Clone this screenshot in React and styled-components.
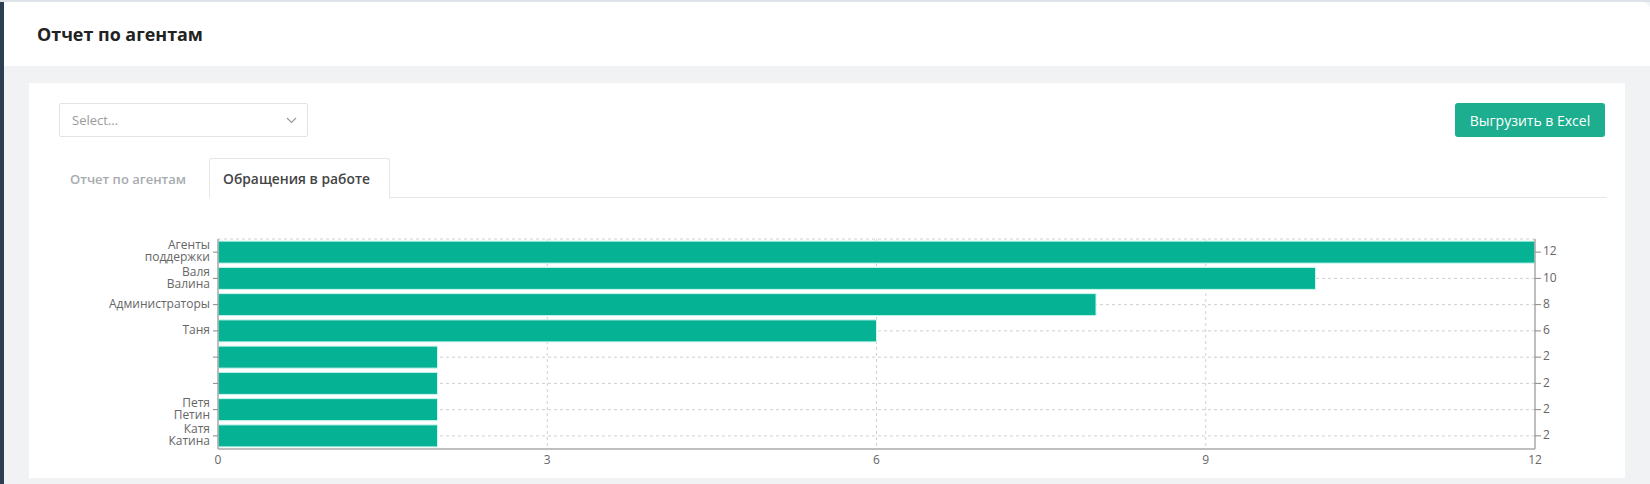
import React from 'react';
import styled, { createGlobalStyle } from 'styled-components';

const GlobalStyle = createGlobalStyle`
  html, body {
    margin: 0;
    padding: 0;
    background: #f1f2f4;
    font-family: "Open Sans", "Noto Sans", sans-serif;
  }
`;

const Page = styled.div`
  display: flex;
  width: 1650px;
  height: 484px;
  background: #f1f2f4;
  border-top: 2px solid #dde3e8;
  box-sizing: border-box;
`;

const Sidebar = styled.div`
  width: 4px;
  flex: none;
  background: #2d3e50;
`;

const Main = styled.div`
  flex: 1;
  display: flex;
  flex-direction: column;
  min-width: 0;
`;

const Header = styled.div`
  height: 64px;
  flex: none;
  display: flex;
  align-items: center;
  padding-left: 33px;
  background: #fff;
  border-top-right-radius: 8px;
`;

const Title = styled.h1`
  margin: 0;
  font-size: 17.9px;
  font-weight: 700;
  color: #222;
`;

const Content = styled.div`
  flex: 1;
  padding: 17px 25px 6px 25px;
  display: flex;
`;

const Card = styled.div`
  flex: 1;
  background: #fff;
  padding: 20px 18px 0 19px;
  display: flex;
  flex-direction: column;
`;

const Toolbar = styled.div`
  display: flex;
  justify-content: space-between;
  align-items: center;
  height: 34px;
`;

const SelectBox = styled.div`
  margin-left: 11px;
  width: 249px;
  height: 34px;
  box-sizing: border-box;
  border: 1px solid #e3e3e3;
  border-radius: 2px;
  display: flex;
  align-items: center;
  justify-content: space-between;
  padding: 0 10px 0 12px;
  font-size: 13px;
  color: #9a9a9a;
`;

const ExportButton = styled.button`
  margin-right: 2px;
  width: 150px;
  height: 34px;
  border: none;
  border-radius: 3px;
  background: #1cae8e;
  color: #fff;
  font-family: inherit;
  font-size: 14px;
`;

const TabBar = styled.div`
  display: flex;
  margin-top: 21px;
  border-bottom: 1px solid #e6e6e6;
`;

const Tab = styled.div`
  height: 40px;
  box-sizing: border-box;
  display: flex;
  align-items: center;
  padding: ${p => (p.$active ? '0 19px 0 13px' : '0 22px 0 21px')};
  font-size: ${p => (p.$active ? '13.8px' : '13px')};
  font-weight: 600;
  color: ${p => (p.$active ? '#444' : '#a7abaf')};
  border: 1px solid ${p => (p.$active ? '#e6e6e6' : 'transparent')};
  border-bottom: none;
  border-radius: 3px 3px 0 0;
  background: #fff;
  margin-bottom: -1px;
`;

const ChartWrap = styled.div`
  flex: 1;
`;

const data = [
  { label: ['Агенты', 'поддержки'], value: 12 },
  { label: ['Валя', 'Валина'], value: 10 },
  { label: ['Администраторы'], value: 8 },
  { label: ['Таня'], value: 6 },
  { label: [], value: 2 },
  { label: [], value: 2 },
  { label: ['Петя', 'Петин'], value: 2 },
  { label: ['Катя', 'Катина'], value: 2 },
];

const L = 170;
const R = 1487;
const T = 41;
const B = 251;
const MAX = 12;

function Chart() {
  const band = (B - T) / data.length;
  const sx = v => L + (v / MAX) * (R - L);
  return (
    <svg width="1559" height="278" style={{ display: 'block' }} fontFamily="Open Sans, sans-serif" fontSize="12">
      <line x1={L} y1={T} x2={R} y2={T} stroke="#d0d0d0" strokeDasharray="3 3" />
      {[3, 6, 9].map(v => (
        <line key={v} x1={sx(v)} y1={T} x2={sx(v)} y2={B} stroke="#d0d0d0" strokeDasharray="3 3" />
      ))}
      {data.map((d, i) => {
        const c = T + band * (i + 0.5);
        return (
          <line key={i} x1={L} y1={c} x2={R} y2={c} stroke="#d0d0d0" strokeDasharray="3 3" />
        );
      })}
      {data.map((d, i) => {
        const c = T + band * (i + 0.5);
        return (
          <rect key={i} x={L} y={c - 11} width={sx(d.value) - L} height={22} fill="#06b294" stroke="#c9f6ec" strokeWidth="1" />
        );
      })}
      <line x1={L} y1={T} x2={L} y2={B} stroke="#aaa" strokeWidth="1.5" />
      <line x1={R} y1={T} x2={R} y2={B} stroke="#aaa" strokeWidth="1.5" />
      <line x1={L} y1={B} x2={R} y2={B} stroke="#aaa" strokeWidth="1.5" />
      {data.map((d, i) => {
        const c = T + band * (i + 0.5);
        const n = d.label.length;
        return (
          <g key={i}>
            <line x1={L - 5} y1={c} x2={L} y2={c} stroke="#888" />
            <line x1={R} y1={c} x2={R + 6} y2={c} stroke="#888" />
            {d.label.map((t, j) => (
              <text key={j} x={L - 8} y={c + (j - (n - 1) / 2) * 12} textAnchor="end" dominantBaseline="middle" fill="#666">
                {t}
              </text>
            ))}
            <text x={R + 8} y={c} dominantBaseline="middle" fill="#666">{d.value}</text>
          </g>
        );
      })}
      {[0, 3, 6, 9, 12].map(v => (
        <text key={v} x={sx(v)} y={263} textAnchor="middle" dominantBaseline="middle" fill="#666">{v}</text>
      ))}
    </svg>
  );
}

export default function App() {
  return (
    <>
      <GlobalStyle />
      <Page>
        <Sidebar />
        <Main>
          <Header>
            <Title>Отчет по агентам</Title>
          </Header>
          <Content>
            <Card>
              <Toolbar>
                <SelectBox>
                  <span>Select...</span>
                  <svg width="11" height="7" viewBox="0 0 11 7">
                    <path d="M1 1l4.5 4.5L10 1" fill="none" stroke="#999" strokeWidth="1.2" />
                  </svg>
                </SelectBox>
                <ExportButton>Выгрузить в Excel</ExportButton>
              </Toolbar>
              <TabBar>
                <Tab>Отчет по агентам</Tab>
                <Tab $active>Обращения в работе</Tab>
              </TabBar>
              <ChartWrap>
                <Chart />
              </ChartWrap>
            </Card>
          </Content>
        </Main>
      </Page>
    </>
  );
}
